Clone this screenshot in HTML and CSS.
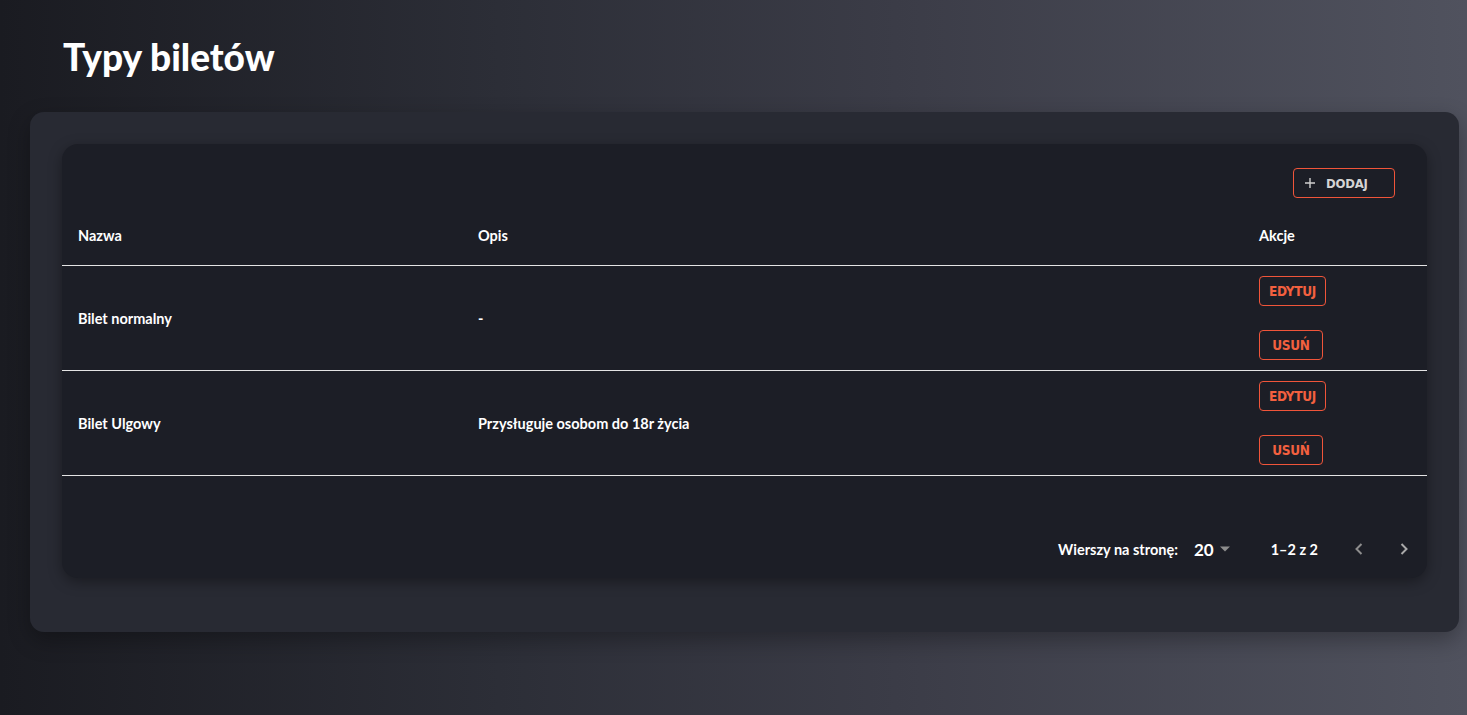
FILE: index.html
```html
<!DOCTYPE html>
<html lang="pl">
<head>
    <meta charset="UTF-8">
    <meta name="viewport" content="width=device-width, initial-scale=1.0">
    <title>Typy biletów</title>
    <link rel="stylesheet" href="styles.css">
</head>
<body>
    <h1 class="page-title">Typy biletów</h1>
    <div class="panel">
        <div class="card">
            <div class="toolbar">
                <button class="btn-add">
                    <svg width="12" height="12" viewBox="0 0 12 12"><path d="M6 1v10M1 6h10" stroke="#cfcfcf" stroke-width="1.4"/></svg>
                    DODAJ
                </button>
            </div>
            <table class="data-table">
                <thead>
                    <tr>
                        <th class="col-name">Nazwa</th>
                        <th class="col-desc">Opis</th>
                        <th class="col-actions">Akcje</th>
                    </tr>
                </thead>
                <tbody>
                    <tr>
                        <td>Bilet normalny</td>
                        <td>-</td>
                        <td class="actions">
                            <button class="btn-outline">EDYTUJ</button>
                            <button class="btn-outline">USUŃ</button>
                        </td>
                    </tr>
                    <tr>
                        <td>Bilet Ulgowy</td>
                        <td>Przysługuje osobom do 18r życia</td>
                        <td class="actions">
                            <button class="btn-outline">EDYTUJ</button>
                            <button class="btn-outline">USUŃ</button>
                        </td>
                    </tr>
                </tbody>
            </table>
            <div class="pagination">
                <span class="rows-label">Wierszy na stronę:</span>
                <span class="rows-select">20
                    <svg width="12" height="6" viewBox="0 0 12 6"><path d="M1 0.5h10L6 5.5z" fill="#8d8d8d"/></svg>
                </span>
                <span class="range">1–2 z 2</span>
                <span class="nav-arrow">
                    <svg width="10" height="14" viewBox="0 0 10 14"><path d="M7.5 2L2.5 7l5 5" fill="none" stroke="#8d8d8d" stroke-width="2"/></svg>
                </span>
                <span class="nav-arrow">
                    <svg width="10" height="14" viewBox="0 0 10 14"><path d="M2.5 2l5 5-5 5" fill="none" stroke="#a9a9a9" stroke-width="2"/></svg>
                </span>
            </div>
        </div>
    </div>
</body>
</html>
```

FILE: styles.css
```css
/* Ticket types page */
html, body {
    height: 100%;
}
body {
    margin: 0;
    padding: 0 8px 0 30px;
    font-family: 'Lato', sans-serif;
    color: #fff;
    background: linear-gradient(to right, #1a1b21 0%, #2c2e37 34%, #3b3c47 61%, #50525e 100%);
    overflow: hidden;
}
.page-title {
    margin: 0;
    padding: 35px 0 0 33px;
    height: 112px;
    box-sizing: border-box;
    font-size: 37px;
    font-weight: 900;
    line-height: 44px;
}
.panel {
    background-color: #282a33;
    border-radius: 14px;
    padding: 32px 32px 54px 32px;
    box-shadow: 0 8px 22px rgba(0, 0, 0, 0.3);
}
.card {
    background-color: #1c1e26;
    border-radius: 16px;
    box-shadow: 0 4px 14px rgba(0, 0, 0, 0.35);
    padding-bottom: 3px;
}
.toolbar {
    display: flex;
    justify-content: flex-end;
    padding: 24px 32px 8px 0;
}
.btn-add {
    display: flex;
    align-items: center;
    gap: 10px;
    width: 102px;
    height: 30px;
    padding: 0 0 0 10px;
    background: none;
    border: 1px solid #f0553a;
    border-radius: 4px;
    color: #d4d4d4;
    font-family: 'DejaVu Sans Condensed', 'DejaVu Sans', sans-serif;
    font-size: 13px;
    font-weight: bold;
    letter-spacing: -0.2px;
    cursor: pointer;
}
.data-table {
    width: 100%;
    border-collapse: collapse;
    table-layout: fixed;
}
.data-table th,
.data-table td {
    text-align: left;
    font-size: 14.5px;
    font-weight: 700;
    padding: 0 16px;
    border-bottom: 1px solid #e4e4e4;
}
.data-table th {
    height: 59px;
}
.col-name {
    width: 368px;
}
.col-actions {
    width: 152px;
}
.data-table td {
    height: 84px;
    padding-top: 10px;
    padding-bottom: 10px;
}
.btn-outline {
    display: block;
    min-width: 64px;
    height: 30px;
    padding: 0 9px;
    background: none;
    border: 1px solid #f0553a;
    border-radius: 4px;
    color: #f3603f;
    font-family: 'DejaVu Sans Condensed', 'DejaVu Sans', sans-serif;
    font-size: 13.5px;
    font-weight: bold;
    letter-spacing: -0.3px;
    cursor: pointer;
}
.btn-outline + .btn-outline {
    margin-top: 24px;
}
.pagination {
    display: flex;
    justify-content: flex-end;
    align-items: center;
    height: 52px;
    margin-top: 47px;
    padding-right: 1px;
    font-size: 14.5px;
    font-weight: 700;
}
.rows-label {
    margin-right: 16px;
}
.rows-select {
    display: flex;
    align-items: center;
    gap: 5px;
    font-size: 17px;
    margin-right: 40px;
}
.range {
    margin-right: 18px;
}
.nav-arrow {
    display: flex;
    align-items: center;
    justify-content: center;
    width: 45px;
    height: 40px;
}
```
